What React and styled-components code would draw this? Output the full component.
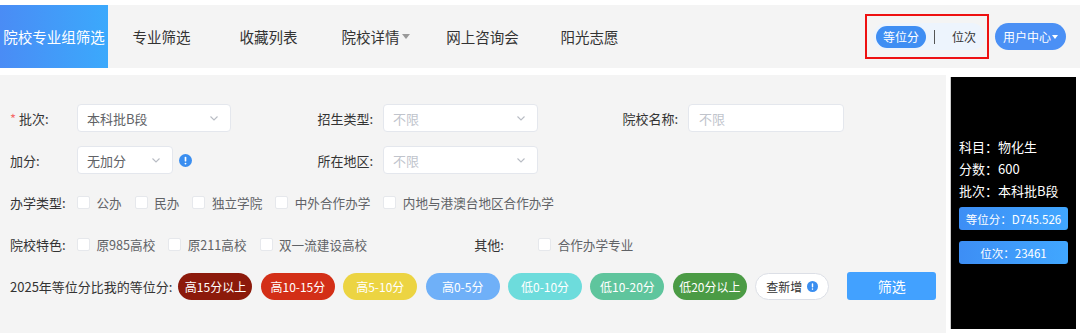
import React from 'react';
import styled, { createGlobalStyle } from 'styled-components';

const GlobalStyle = createGlobalStyle`
    body {
        margin: 0;
        background: #fff;
        font-family: "Noto Sans CJK SC", "Noto Sans", sans-serif;
        color: #333;
    }
`

const navItems = ['专业筛选', '收藏列表', '院校详情', '网上咨询会', '阳光志愿'];

const gaps = [
    { text: '高15分以上', bg: '#8c1a0b' },
    { text: '高10-15分', bg: '#d32f17' },
    { text: '高5-10分', bg: '#ecd442' },
    { text: '高0-5分', bg: '#6fb0f8' },
    { text: '低0-10分', bg: '#6ddcdc' },
    { text: '低10-20分', bg: '#5fc59d' },
    { text: '低20分以上', bg: '#4b9b45' },
];

function Chevron() {
    return (
        <svg width="12" height="12" viewBox="0 0 12 12">
            <path d="M2.5 4.5 L6 8 L9.5 4.5" fill="none" stroke="#b8bcc4" strokeWidth="1.1" />
        </svg>
    )
}

function InfoIcon({ size = 13 }) {
    return (
        <svg width={size} height={size} viewBox="0 0 14 14">
            <circle cx="7" cy="7" r="7" fill="#3a8ef0" />
            <rect x="6.1" y="3" width="1.8" height="5.2" rx="0.9" fill="#fff" />
            <circle cx="7" cy="10.3" r="1" fill="#fff" />
        </svg>
    )
}

function Check({ children }) {
    return (
        <CheckItem>
            <Box />
            <span>{children}</span>
        </CheckItem>
    )
}

export default function App() {
    return (
        <>
            <GlobalStyle />
            <Page>
                <Nav>
                    <ActiveTab>院校专业组筛选</ActiveTab>
                    {navItems.map((n) => (
                        <NavItem key={n}>
                            {n}
                            {n === '院校详情' && <Caret />}
                        </NavItem>
                    ))}
                    <NavRight>
                        <Marked>
                            <Toggle>
                                <TogglePill>等位分</TogglePill>
                                <Sep />
                                <ToggleText>位次</ToggleText>
                            </Toggle>
                        </Marked>
                        <UserBtn>用户中心<SmallCaret /></UserBtn>
                    </NavRight>
                </Nav>

                <Main>
                    <Panel>
                        <GridRow>
                            <Label><Star>*</Star> 批次:</Label>
                            <Cell>
                                <Select $w={154}><span>本科批B段</span><Chevron /></Select>
                            </Cell>
                            <RLabel>招生类型:</RLabel>
                            <Cell>
                                <Select $w={155} $empty><span>不限</span><Chevron /></Select>
                            </Cell>
                            <RLabel>院校名称:</RLabel>
                            <Cell>
                                <Input $w={156}>不限</Input>
                            </Cell>
                        </GridRow>
                        <GridRow>
                            <Label>加分:</Label>
                            <Cell>
                                <Select $w={96}><span>无加分</span><Chevron /></Select>
                                <IconWrap><InfoIcon /></IconWrap>
                            </Cell>
                            <RLabel>所在地区:</RLabel>
                            <Cell>
                                <Select $w={155} $empty><span>不限</span><Chevron /></Select>
                            </Cell>
                        </GridRow>
                        <FlexRow>
                            <Label>办学类型:</Label>
                            <Check>公办</Check>
                            <Check>民办</Check>
                            <Check>独立学院</Check>
                            <Check>中外合作办学</Check>
                            <Check>内地与港澳台地区合作办学</Check>
                        </FlexRow>
                        <FlexRow>
                            <Label>院校特色:</Label>
                            <Check>原985高校</Check>
                            <Check>原211高校</Check>
                            <Check>双一流建设高校</Check>
                            <OtherLabel>其他:</OtherLabel>
                            <Check>合作办学专业</Check>
                        </FlexRow>
                        <FlexRow>
                            <WideLabel>2025年等位分比我的等位分:</WideLabel>
                            <Pills>
                                {gaps.map((g) => (
                                    <Pill key={g.text} $bg={g.bg}>{g.text}</Pill>
                                ))}
                                <NewPill>查新增<InfoIcon size={11} /></NewPill>
                            </Pills>
                            <FilterBtn>筛选</FilterBtn>
                        </FlexRow>
                    </Panel>
                    <Side>
                        <SideText>科目：物化生</SideText>
                        <SideText>分数：600</SideText>
                        <SideText>批次：本科批B段</SideText>
                        <SideBtn>等位分：D745.526</SideBtn>
                        <SideBtn>位次：23461</SideBtn>
                    </Side>
                </Main>
            </Page>
        </>
    )
};

const Page = styled.div`
    width: 1080px;
    height: 333px;
    padding-top: 5px;
    box-sizing: border-box;
    overflow: hidden;
`

const Nav = styled.div`
    display: flex;
    align-items: center;
    height: 63px;
    background: #f4f4f4;
`

const ActiveTab = styled.div`
    width: 108px;
    height: 100%;
    display: flex;
    align-items: center;
    justify-content: center;
    color: #fff;
    font-size: 14.5px;
    background: linear-gradient(90deg, #4a8cf5, #3ba9fc);
`

const NavItem = styled.div`
    width: 107px;
    display: flex;
    align-items: center;
    justify-content: center;
    font-size: 14.5px;
    color: #333;
`

const Caret = styled.span`
    display: inline-block;
    margin-left: 2px;
    border-left: 4.5px solid transparent;
    border-right: 4.5px solid transparent;
    border-top: 5px solid #999;
`

const SmallCaret = styled(Caret)`
    margin-left: 1px;
    border-top-color: #fff;
    border-left-width: 3.5px;
    border-right-width: 3.5px;
    border-top-width: 4px;
`

const NavRight = styled.div`
    margin-left: auto;
    display: flex;
    align-items: center;
    gap: 6px;
    padding-right: 14px;
`

const Marked = styled.div`
    width: 124px;
    height: 45px;
    box-sizing: border-box;
    border: 2px solid #ee1111;
    display: flex;
    align-items: center;
    padding-left: 6px;
`

const Toggle = styled.div`
    display: flex;
    align-items: center;
    height: 27px;
    width: 112px;
    border-radius: 14px;
    background: #edf4fd;
    padding-left: 3px;
    box-sizing: border-box;
`

const TogglePill = styled.div`
    height: 22px;
    padding: 0 7px;
    border-radius: 11px;
    background: #3f8ef3;
    color: #fff;
    font-size: 12px;
    display: flex;
    align-items: center;
`

const Sep = styled.div`
    width: 1px;
    height: 14px;
    background: #555;
    margin-left: 8px;
`

const ToggleText = styled.div`
    margin-left: 17px;
    font-size: 12px;
    color: #333;
`

const UserBtn = styled.div`
    height: 27px;
    width: 71px;
    border-radius: 14px;
    background: #4b90f5;
    color: #fff;
    font-size: 12px;
    display: flex;
    align-items: center;
    justify-content: center;
`

const Main = styled.div`
    display: flex;
    margin-top: 7px;
    gap: 4px;
`

const Panel = styled.div`
    width: 946px;
    height: 258px;
    background: #f4f4f4;
    box-sizing: border-box;
    padding: 29px 0 0 10px;
    display: flex;
    flex-direction: column;
    gap: 14px;
`

const GridRow = styled.div`
    display: grid;
    grid-template-columns: 67px 230px 76px 229px 76px 156px;
    height: 28px;
    align-items: center;
`

const FlexRow = styled.div`
    display: flex;
    align-items: center;
    height: 28px;
`

const Label = styled.div`
    width: 67px;
    flex-shrink: 0;
    font-size: 13px;
    color: #333;
`

const WideLabel = styled(Label)`
    width: auto;
    margin-right: 6px;
`

const OtherLabel = styled(Label)`
    margin-left: 94px;
    width: 64px;
`

const RLabel = styled.div`
    font-size: 13px;
    color: #333;
    text-align: right;
    padding-right: 10px;
`

const Star = styled.span`
    color: #f56c6c;
`

const Cell = styled.div`
    display: flex;
    align-items: center;
`

const Select = styled.div`
    width: ${(p) => p.$w}px;
    height: 28px;
    box-sizing: border-box;
    background: #fff;
    border: 1px solid #e4e7ed;
    border-radius: 4px;
    display: flex;
    align-items: center;
    justify-content: space-between;
    padding: 0 10px 0 9px;
    font-size: 13px;
    color: ${(p) => (p.$empty ? '#c0c4cc' : '#606266')};
`

const Input = styled.div`
    width: ${(p) => p.$w}px;
    height: 28px;
    box-sizing: border-box;
    background: #fff;
    border: 1px solid #e4e7ed;
    border-radius: 4px;
    display: flex;
    align-items: center;
    padding: 0 10px;
    font-size: 13px;
    color: #c0c4cc;
`

const IconWrap = styled.span`
    display: flex;
    margin-left: 6px;
`

const CheckItem = styled.label`
    display: flex;
    align-items: center;
    gap: 6.5px;
    margin-right: 13px;
    font-size: 12.6px;
    color: #606266;
`

const Box = styled.span`
    width: 13px;
    height: 13px;
    box-sizing: border-box;
    background: #fff;
    border: 1px solid #e6e8ec;
    border-radius: 2px;
`

const Pills = styled.div`
    display: flex;
    gap: 8.4px;
`

const Pill = styled.div`
    width: 74px;
    height: 27px;
    border-radius: 14px;
    background: ${(p) => p.$bg};
    color: #fff;
    font-size: 12px;
    display: flex;
    align-items: center;
    justify-content: center;
`

const NewPill = styled(Pill)`
    background: #fff;
    color: #333;
    border: 1px solid #dcdfe6;
    box-sizing: border-box;
    gap: 5px;
`

const FilterBtn = styled.div`
    margin-left: 18px;
    width: 89px;
    height: 28px;
    border-radius: 3px;
    background: #42a1ff;
    color: #fff;
    font-size: 14px;
    display: flex;
    align-items: center;
    justify-content: center;
`

const Side = styled.div`
    width: 126px;
    height: 252px;
    margin-top: 2px;
    background: #000;
    border-left: 1px solid #ccc;
    box-sizing: border-box;
    padding: 0 8px;
    display: flex;
    flex-direction: column;
    justify-content: center;
`

const SideText = styled.div`
    color: #fff;
    font-size: 13px;
    line-height: 22px;
`

const SideBtn = styled.div`
    margin-top: 5px;
    margin-bottom: 6px;
    height: 23px;
    border-radius: 3px;
    background: linear-gradient(90deg, #3d8ef5, #41a7ff);
    color: #fff;
    font-size: 11.5px;
    display: flex;
    align-items: center;
    justify-content: center;
`
